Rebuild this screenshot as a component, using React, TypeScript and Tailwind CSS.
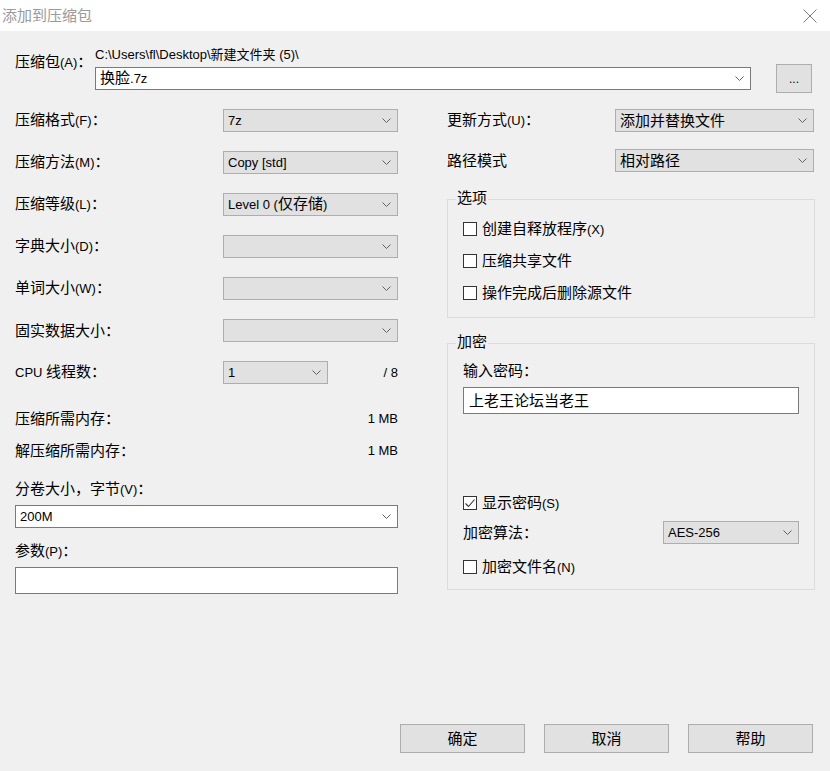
import React from "react";

// Splits a label into ASCII and CJK runs so each run gets its own size,
// the way the Windows dialog font mixes a small Latin face with a larger CJK one.
function Mixed({ text }: { text: string }) {
  const parts = text.match(/[\x00-\x7f]+|[^\x00-\x7f]+/g) ?? [];
  return (
    <>
      {parts.map((p, i) =>
        /[\x00-\x7f]/.test(p[0]) ? (
          <span key={i} className="text-[13px]">
            {p}
          </span>
        ) : (
          <span key={i} className="text-[15px]">
            {p}
          </span>
        )
      )}
    </>
  );
}

function Chevron() {
  return (
    <svg width="9" height="5" viewBox="0 0 9 5" className="shrink-0">
      <path d="M0.5 0.5 L4.5 4.5 L8.5 0.5" fill="none" stroke="#606060" strokeWidth="1" />
    </svg>
  );
}

function Combo({
  value = "",
  className = "",
  white = false,
}: {
  value?: string;
  className?: string;
  white?: boolean;
}) {
  return (
    <div
      className={`flex h-[23px] items-center justify-between border pl-[4px] pr-[6px] ${
        white ? "border-[#7a7a7a] bg-white" : "border-[#adadad] bg-[#e1e1e1]"
      } ${className}`}
    >
      <span className="truncate whitespace-nowrap">
        <Mixed text={value} />
      </span>
      <Chevron />
    </div>
  );
}

function CheckBox({ label, checked = false }: { label: string; checked?: boolean }) {
  return (
    <div className="flex h-[20px] items-center">
      <span className="flex h-[14px] w-[14px] items-center justify-center border border-[#333333] bg-white">
        {checked && (
          <svg width="12" height="12" viewBox="0 0 12 12">
            <path d="M1.5 6.5 L4.5 9.5 L10.5 2.5" fill="none" stroke="#333333" strokeWidth="1.1" />
          </svg>
        )}
      </span>
      <span className="ml-[5px] whitespace-nowrap">
        <Mixed text={label} />
      </span>
    </div>
  );
}

function Group({
  title,
  className = "",
  children,
}: {
  title: string;
  className?: string;
  children: React.ReactNode;
}) {
  return (
    <div className={`relative border border-[#dcdcdc] ${className}`}>
      <span className="absolute left-[8px] top-[-12px] bg-[#f0f0f0] px-[1px] leading-[20px]">
        <Mixed text={title} />
      </span>
      {children}
    </div>
  );
}

function Row({ label, children }: { label: string; children: React.ReactNode }) {
  return (
    <div className="flex h-[23px] items-center">
      <div className="w-[208px] whitespace-nowrap">
        <Mixed text={label} />
      </div>
      {children}
    </div>
  );
}

function Button({ label }: { label: string }) {
  return (
    <div className="flex h-[29px] w-[125px] items-center justify-center border border-[#adadad] bg-[#e1e1e1]">
      <Mixed text={label} />
    </div>
  );
}

export default function App() {
  return (
    <div className="flex h-[771px] w-[830px] flex-col bg-[#f0f0f0] font-['Liberation_Sans','Noto_Sans_CJK_SC',sans-serif] leading-[20px] text-black">
      {/* title bar */}
      <div className="flex h-[31px] shrink-0 items-center justify-between bg-white pl-[2px] pr-[13px]">
        <span className="text-[15px] text-[#9a9a9a]">添加到压缩包</span>
        <svg width="14" height="14" viewBox="0 0 14 14">
          <path d="M0.5 0.5 L13.5 13.5 M13.5 0.5 L0.5 13.5" stroke="#7a7a7a" strokeWidth="1" />
        </svg>
      </div>

      <div className="flex flex-1 flex-col px-[15px] pt-[16px]">
        {/* archive path */}
        <div className="flex">
          <div className="w-[80px] whitespace-nowrap pt-[5px]">
            <Mixed text="压缩包(A)：" />
          </div>
          <div className="flex w-[656px] flex-col">
            <div className="h-[16px] whitespace-nowrap text-[13px] leading-[16px]">
              C:\Users\fl\Desktop\新建文件夹 (5)\
            </div>
            <Combo white value="换脸.7z" className="mt-[4px] pl-[3px]" />
          </div>
          <div className="ml-[25px] mt-[17px] flex h-[29px] w-[36px] items-center justify-center border border-[#adadad] bg-[#e1e1e1] text-[12px]">
            ...
          </div>
        </div>

        <div className="mt-[16px] flex">
          {/* left column */}
          <div className="flex w-[383px] flex-col">
            <div className="flex flex-col gap-[19px]">
              <Row label="压缩格式(F)：">
                <Combo value="7z" className="w-[175px]" />
              </Row>
              <Row label="压缩方法(M)：">
                <Combo value="Copy [std]" className="w-[175px]" />
              </Row>
              <Row label="压缩等级(L)：">
                <Combo value="Level 0 (仅存储)" className="w-[175px]" />
              </Row>
              <Row label="字典大小(D)：">
                <Combo className="w-[175px]" />
              </Row>
              <Row label="单词大小(W)：">
                <Combo className="w-[175px]" />
              </Row>
              <Row label="固实数据大小：">
                <Combo className="w-[175px]" />
              </Row>
              <Row label="CPU 线程数：">
                <Combo value="1" className="w-[105px]" />
                <span className="ml-auto text-[13px]">/ 8</span>
              </Row>
            </div>

            <div className="mt-[25px] flex h-[20px] items-center justify-between">
              <span>
                <Mixed text="压缩所需内存：" />
              </span>
              <span className="text-[13px]">1 MB</span>
            </div>
            <div className="mt-[12px] flex h-[20px] items-center justify-between">
              <span>
                <Mixed text="解压缩所需内存：" />
              </span>
              <span className="text-[13px]">1 MB</span>
            </div>

            <div className="mt-[18px] h-[20px]">
              <Mixed text="分卷大小，字节(V)：" />
            </div>
            <Combo white value="200M" className="mt-[6px] w-full" />
            <div className="mt-[13px] h-[20px]">
              <Mixed text="参数(P)：" />
            </div>
            <div className="mt-[6px] h-[27px] w-full border border-[#7a7a7a] bg-white" />
          </div>

          {/* right column */}
          <div className="ml-[49px] flex w-[368px] flex-col">
            <div className="flex h-[23px] items-center">
              <div className="w-[168px] whitespace-nowrap">
                <Mixed text="更新方式(U)：" />
              </div>
              <Combo value="添加并替换文件" className="w-[199px]" />
            </div>
            <div className="mt-[17px] flex h-[23px] items-center">
              <div className="w-[168px] whitespace-nowrap">
                <Mixed text="路径模式" />
              </div>
              <Combo value="相对路径" className="w-[199px]" />
            </div>

            <Group title="选项" className="mt-[27px] h-[119px]">
              <div className="flex flex-col gap-[12px] pl-[15px] pt-[19px]">
                <CheckBox label="创建自释放程序(X)" />
                <CheckBox label="压缩共享文件" />
                <CheckBox label="操作完成后删除源文件" />
              </div>
            </Group>

            <Group title="加密" className="mt-[25px] h-[247px]">
              <div className="flex flex-col pl-[15px] pr-[15px] pt-[17px]">
                <div className="h-[20px]">
                  <Mixed text="输入密码：" />
                </div>
                <div className="mt-[6px] flex h-[27px] items-center border border-[#7a7a7a] bg-white pl-[5px]">
                  <Mixed text="上老王论坛当老王" />
                </div>
                <div className="mt-[79px]">
                  <CheckBox label="显示密码(S)" checked />
                </div>
                <div className="mt-[8px] flex h-[23px] items-center">
                  <span className="whitespace-nowrap">
                    <Mixed text="加密算法：" />
                  </span>
                  <Combo value="AES-256" className="ml-auto w-[136px]" />
                </div>
                <div className="mt-[13px]">
                  <CheckBox label="加密文件名(N)" />
                </div>
              </div>
            </Group>
          </div>
        </div>

        {/* dialog buttons */}
        <div className="mt-auto flex justify-end gap-[19px] pb-[18px] pr-[2px]">
          <Button label="确定" />
          <Button label="取消" />
          <Button label="帮助" />
        </div>
      </div>
    </div>
  );
}
